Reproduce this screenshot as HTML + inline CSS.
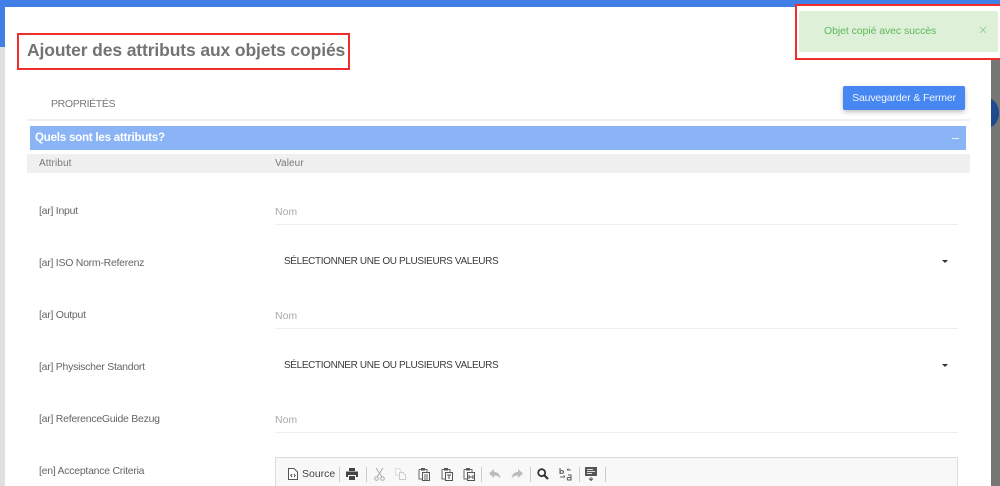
<!DOCTYPE html>
<html><head><meta charset="utf-8">
<style>
html,body{margin:0;padding:0;overflow:hidden;width:1000px;height:486px}
body{position:relative;background:#fff;font-family:"Liberation Sans",sans-serif}
#w div,#w svg,#w span{position:absolute;white-space:nowrap}
#w{position:absolute;left:0;top:0;width:1000px;height:486px;overflow:hidden;filter:blur(.35px)}
.l{left:39px;font-size:10.5px;letter-spacing:-.26px;line-height:14px;color:#666}
.n{left:275px;font-size:10.5px;line-height:14px;color:#aaa}
.u{left:275px;width:683px;height:1px;background:#eee}
.s{left:284px;font-size:10px;letter-spacing:-.36px;line-height:14px;color:#3a3a3a}
.a{left:942px;width:0;height:0;border-left:3.5px solid transparent;border-right:3.5px solid transparent;border-top:3.5px solid #333}
.p{top:467px;width:1px;height:15px;background:#ccc}
</style></head><body>
<div id="w">
<div style="left:0;top:0;width:1000px;height:7px;background:#3f7fe6"></div>
<div style="left:0;top:7px;width:5px;height:40px;background:#3f7fe6"></div>
<div style="left:0;top:47px;width:5px;height:439px;background:#e0e0e0"></div>
<div style="left:991px;top:7px;width:9px;height:479px;background:#767676"></div>
<div style="left:975px;top:98px;width:24px;height:30px;border-radius:50%;background:#1f4a8c;clip-path:inset(0 0 0 16px)"></div>
<div style="left:5px;top:7px;width:986px;height:479px;background:#fff"></div>

<div style="left:17px;top:33px;width:329px;height:33px;border:2px solid #f02c2c"></div>
<div style="left:27px;top:40px;font-size:17.5px;letter-spacing:-.12px;line-height:21px;font-weight:bold;color:#737373">Ajouter des attributs aux objets copiés</div>

<div style="left:795px;top:4px;width:203px;height:52px;border:2px solid #f02c2c;background:#fff"></div>
<div style="left:799px;top:11px;width:199px;height:41px;background:#dff0d8;border-radius:2px"></div>
<div style="left:824px;top:24px;font-size:10.5px;line-height:14px;color:#5cb85c;letter-spacing:-.07px">Objet copié avec succès</div>
<svg style="left:979px;top:26px" width="8" height="8" viewBox="0 0 8 8"><path d="M1 1L7 7M7 1L1 7" stroke="#9fd09f" stroke-width="1"/></svg>

<div style="left:51px;top:97px;font-size:10.5px;letter-spacing:-.35px;line-height:14px;color:#777">PROPRIÉTÉS</div>
<div style="left:843px;top:86px;width:122px;height:24px;background:#4687f2;border-radius:2px;box-shadow:0 2px 5px rgba(0,0,0,.25);color:#f0f5ff;font-size:10.5px;letter-spacing:-.15px;line-height:24px;text-align:center">Sauvegarder &amp; Fermer</div>
<div style="left:27px;top:119px;width:943px;height:2px;background:#f0f0f0"></div>
<div style="left:30px;top:126px;width:936px;height:24px;background:#8ab4f6"></div>
<div style="left:35px;top:131px;font-size:11.5px;letter-spacing:-.2px;line-height:15px;font-weight:bold;color:#fff">Quels sont les attributs?</div>
<div style="left:952px;top:138px;width:7px;height:1px;background:#e8f0fd"></div>
<div style="left:27px;top:154px;width:943px;height:19px;background:#f0f0f0"></div>
<div style="left:39px;top:157px;font-size:10px;letter-spacing:.1px;line-height:14px;color:#777">Attribut</div>
<div style="left:275px;top:157px;font-size:10px;letter-spacing:.1px;line-height:14px;color:#777">Valeur</div>

<div class="l" style="top:204px">[ar] Input</div>
<div class="n" style="top:205px">Nom</div>
<div class="u" style="top:224px"></div>
<div class="l" style="top:256px">[ar] ISO Norm-Referenz</div>
<div class="s" style="top:255px">SÉLECTIONNER UNE OU PLUSIEURS VALEURS</div>
<div class="a" style="top:260px"></div>
<div class="l" style="top:308px">[ar] Output</div>
<div class="n" style="top:309px">Nom</div>
<div class="u" style="top:328px"></div>
<div class="l" style="top:360px">[ar] Physischer Standort</div>
<div class="s" style="top:359px">SÉLECTIONNER UNE OU PLUSIEURS VALEURS</div>
<div class="a" style="top:364px"></div>
<div class="l" style="top:412px">[ar] ReferenceGuide Bezug</div>
<div class="n" style="top:413px">Nom</div>
<div class="u" style="top:432px"></div>
<div class="l" style="top:464px">[en] Acceptance Criteria</div>

<div style="left:275px;top:457px;width:681px;height:40px;border:1px solid #ddd;background:#f8f8f8"></div>
<svg style="left:288px;top:468px" width="10" height="12" viewBox="0 0 10 12"><path d="M.5.5H6L9.5 4V11.5H.5Z" fill="#fff" stroke="#555"/><path d="M4 6L2.8 7.5 4 9M6 6L7.2 7.5 6 9" fill="none" stroke="#444"/></svg>
<div style="left:302px;top:467px;font-size:10.5px;line-height:14px;color:#444">Source</div>
<div class="p" style="left:339px"></div>
<svg style="left:346px;top:468px" width="12" height="12" viewBox="0 0 12 12"><path d="M3 0H9V3H3ZM0 3.500H12V9H10V7H2V9H0ZM3 8H9V12H3Z" fill="#444"/></svg>
<div class="p" style="left:366px"></div>
<svg style="left:374px;top:468px" width="11" height="13" viewBox="0 0 11 13"><path d="M2 0L8 9M9 0L3 9" stroke="#aaa" fill="none"/><circle cx="2.500" cy="10.500" r="1.800" fill="none" stroke="#aaa"/><circle cx="8.500" cy="10.500" r="1.800" fill="none" stroke="#aaa"/></svg>
<svg style="left:395px;top:468px" width="11" height="12" viewBox="0 0 11 12"><path d="M.5.5H4L6 2.500V7H.5Z" fill="none" stroke="#ddd"/><path d="M4.500 4.500H8L10.500 7V11.500H4.500Z" fill="#f8f8f8" stroke="#ccc"/></svg>
<svg style="left:418px;top:467px" width="12" height="14" viewBox="0 0 12 14"><path d="M1 2.500H9V5M1 2.500V12H4" fill="none" stroke="#666"/><path d="M3 1H7V3.500H3Z" fill="#555"/><rect x="4.500" y="5.500" width="7" height="8" fill="#f8f8f8" stroke="#555"/><path d="M6 8H10M6 10H10M6 12H10" stroke="#666"/></svg>
<svg style="left:441px;top:467px" width="12" height="14" viewBox="0 0 12 14"><path d="M1 2.500H9V5M1 2.500V12H4" fill="none" stroke="#666"/><path d="M3 1H7V3.500H3Z" fill="#555"/><rect x="4.500" y="5.500" width="7" height="8" fill="#f8f8f8" stroke="#555"/><path d="M6 8H10M8 8V12" stroke="#555"/></svg>
<svg style="left:463px;top:467px" width="12" height="14" viewBox="0 0 12 14"><path d="M1 2.500H9V5M1 2.500V12H4" fill="none" stroke="#666"/><path d="M3 1H7V3.500H3Z" fill="#555"/><rect x="4.500" y="5.500" width="7" height="8" fill="#f8f8f8" stroke="#555"/><path d="M6 8V12M10 8V12M6 10H10" stroke="#555"/></svg>
<div class="p" style="left:481px"></div>
<svg style="left:489px;top:469px" width="12" height="10" viewBox="0 0 12 10"><path d="M0 4.500L5 0V3C9 3 11 5.500 11.500 9.500C10 7.500 8 6.500 5 6.500V9Z" fill="#bbb"/></svg>
<svg style="left:511px;top:469px" width="12" height="10" viewBox="0 0 12 10"><path d="M12 4.500L7 0V3C3 3 1 5.500 .5 9.500C2 7.500 4 6.500 7 6.500V9Z" fill="#bbb"/></svg>
<div class="p" style="left:530px"></div>
<svg style="left:537px;top:468px" width="12" height="12" viewBox="0 0 12 12"><circle cx="4.700" cy="4.700" r="3.500" fill="none" stroke="#333" stroke-width="1.800"/><path d="M7.500 7.500L11 11" stroke="#333" stroke-width="2.200"/></svg>
<svg style="left:559px;top:467px" width="14" height="14" viewBox="0 0 14 14"><path d="M1 1V7M1 4.500C2 3 4.500 3.500 4.500 5S2 7 1 5.500" fill="none" stroke="#555"/><path d="M8 3H12M8 3L9.500 1.500M1 10H6M6 10L4.500 8.500" fill="none" stroke="#666"/><path d="M9 8H12V13H9C8 13 8 10.500 9 10.500H12" fill="none" stroke="#555"/></svg>
<div class="p" style="left:579px"></div>
<svg style="left:585px;top:467px" width="13" height="14" viewBox="0 0 13 14"><path d="M0 0H12V9H0Z" fill="#555"/><path d="M2 2.500H8M2 4.500H10M2 6.500H7" stroke="#ddd"/><path d="M6 10V13M4 11.500L6 13.500 8 11.500" fill="none" stroke="#555"/></svg>
<div class="p" style="left:605px"></div>
</div>
</body></html>
